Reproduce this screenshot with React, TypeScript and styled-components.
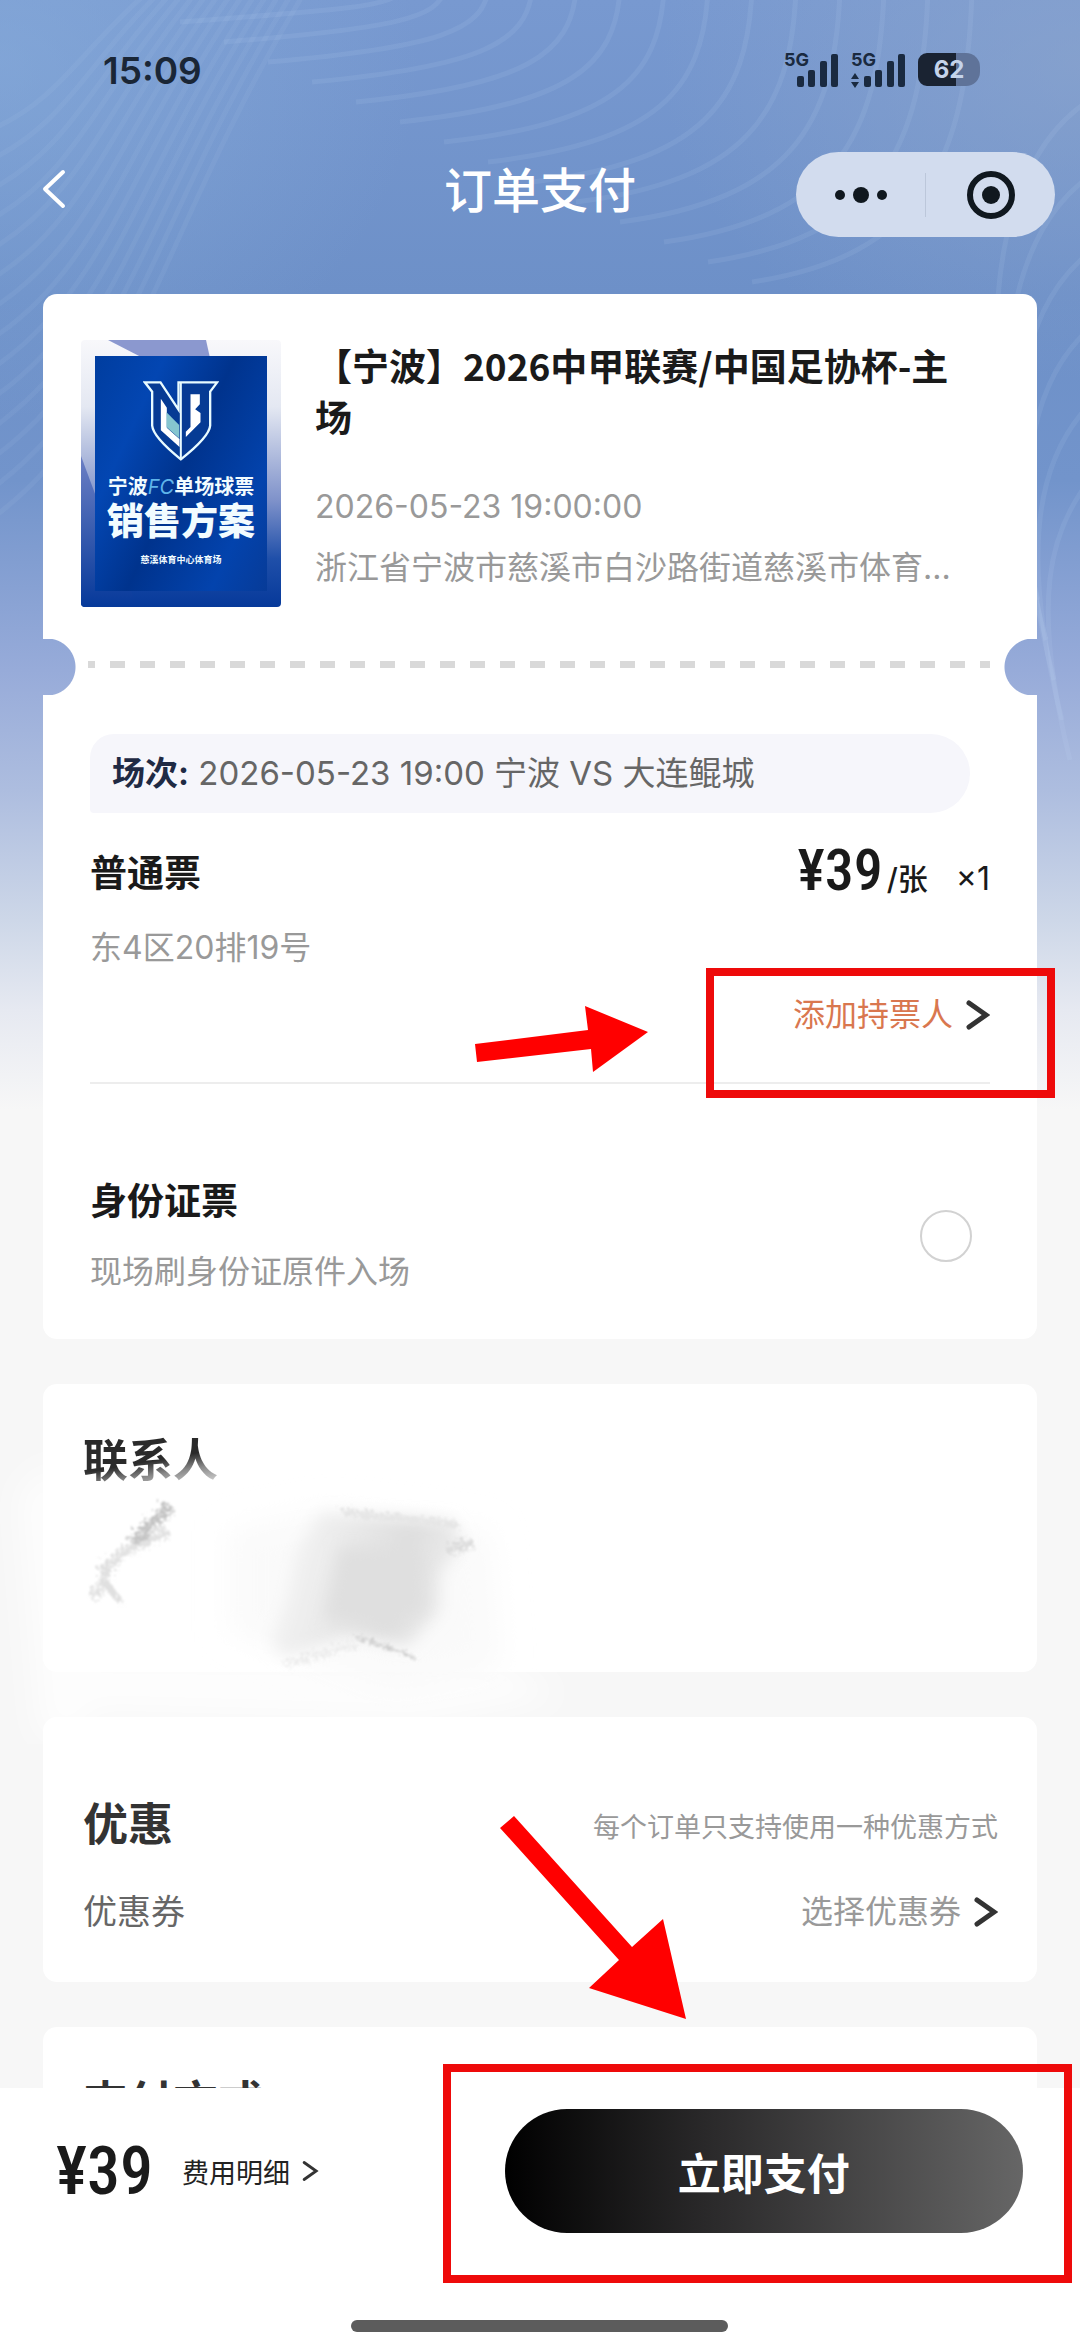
import { useState } from 'react';
import styled, { createGlobalStyle } from 'styled-components';

const waves = Array.from({ length: 14 }, (_, i) => i);

function Chevron({ width = 24, height = 30, stroke = 5, color = '#333' }) {
  return (
    <svg width={width} height={height} viewBox="0 0 24 30" aria-hidden="true">
      <path
        d="M3 3 L20 15 L3 27"
        fill="none"
        stroke={color}
        strokeWidth={stroke}
        strokeLinecap="round"
        strokeLinejoin="miter"
      />
    </svg>
  );
}

function SignalBars({ active = false }: { active?: boolean }) {
  return (
    <svg width="42" height="33" viewBox="0 0 42 33" aria-hidden="true">
      <rect x="0" y="22" width="7" height="11" rx="2" />
      <rect x="11" y="16" width="7" height="17" rx="2" />
      <rect x="23" y="7" width="7" height="26" rx="2" />
      <rect x="34" y="0" width="7" height="33" rx="2" />
      {active && (
        <path d="M-13 25 L-9 19 L-5 25 Z M-13 28 L-9 34 L-5 28 Z" />
      )}
    </svg>
  );
}

function Waves() {
  return (
    <WaveArt viewBox="0 0 1080 1100" preserveAspectRatio="none" aria-hidden="true">
      <g fill="none" stroke="#d5e6ff" strokeWidth="5" strokeOpacity="0.09">
        {waves.map((i) => {
          const x = 400 + i * 44;
          const y = 10 + i * 20;
          return (
            <path
              key={`r${i}`}
              d={`M${x} -10 C ${x - 5} ${y * 0.6}, ${x - 50} ${y * 0.95}, ${x - 220} ${y + 12}`}
            />
          );
        })}
        {waves.map((i) => (
          <path
            key={`l${i}`}
            strokeOpacity="0.06"
            d={`M-10 ${130 + i * 30} C ${60 + i * 6} ${100 + i * 24}, ${
              80 + i * 6
            } ${50 + i * 14}, ${150 + i * 12} -10`}
          />
        ))}
        {waves.slice(0, 6).map((i) => (
          <path
            key={`e${i}`}
            d={`M1090 ${100 + i * 76} C ${1010 + i * 8} ${150 + i * 76}, ${
              960 + i * 14
            } ${300 + i * 60}, ${1030 + i * 8} ${560 + i * 40}`}
          />
        ))}
      </g>
    </WaveArt>
  );
}

function ClubLogo() {
  return (
    <svg width="76" height="80" viewBox="220 152 227 240" aria-hidden="true">
      <path
        d="M225 156 H272 L326 238 V156 H442 L421 184 V286 Q418 320 333 387 Q250 320 247 286 V184 Z"
        fill="#063b94"
        stroke="#e8fbff"
        strokeWidth="7"
      />
      <path d="M333 156 V385" stroke="#e8fbff" strokeWidth="6" />
      <path d="M273 205 L291 232 V292 L329 326 V350 L273 300 Z" fill="#fff" />
      <path d="M290 246 L328 284 V324 L290 290 Z" fill="#86c5cf" />
      <path
        d="M362 192 H390 V222 L376 237 L392 248 V276 L348 320 V304 L362 290 Z"
        fill="#fff"
      />
    </svg>
  );
}

function PosterBackdrop() {
  return (
    <svg viewBox="0 0 200 267" aria-hidden="true">
      <defs>
        <linearGradient id="sheet" x1="0" y1="0" x2="0" y2="1">
          <stop offset="0" stopColor="#f8f8fb" />
          <stop offset="0.25" stopColor="#e4e8f2" />
          <stop offset="0.6" stopColor="#7f92ca" />
          <stop offset="0.82" stopColor="#1f4fa9" />
          <stop offset="1" stopColor="#06399a" />
        </linearGradient>
        <linearGradient id="shard" x1="0" y1="0" x2="0" y2="1">
          <stop offset="0" stopColor="#6c7fc4" />
          <stop offset="1" stopColor="#06399a" />
        </linearGradient>
      </defs>
      <path d="M0 0 H200 V267 H0 Z" fill="url(#sheet)" />
      <path d="M27 0 H125 L129 18 H62 Z" fill="#8b98cf" />
      <path d="M0 116 L56 267 H0 Z" fill="url(#shard)" />
    </svg>
  );
}

function Smudge() {
  return (
    <SmudgeArt viewBox="0 1383 660 360" width="660" height="360" aria-hidden="true">
      <defs>
        <filter id="soft" x="-30%" y="-30%" width="160%" height="160%">
          <feGaussianBlur stdDeviation="16" />
        </filter>
        <filter id="smear" x="-20%" y="-20%" width="140%" height="140%">
          <feGaussianBlur stdDeviation="8" />
        </filter>
        <filter id="grain" x="-20%" y="-20%" width="140%" height="140%">
          <feTurbulence baseFrequency="0.2" numOctaves="3" />
          <feDisplacementMap in="SourceGraphic" scale="16" />
          <feGaussianBlur stdDeviation="1" />
        </filter>
        <linearGradient id="blot" x1="0" y1="0.4" x2="1" y2="0.6">
          <stop offset="0" stopColor="#f6f6f6" />
          <stop offset="0.65" stopColor="#dedede" />
          <stop offset="1" stopColor="#f0f0f0" />
        </linearGradient>
      </defs>
      <path
        d="M20 1490 L60 1460 L90 1740 L40 1735 Z M60 1655 L500 1660 L560 1695 L420 1720 L60 1710 Z"
        fill="#fff"
        fillOpacity="0.8"
        filter="url(#soft)"
      />
      <path
        d="M230 1530 L330 1510 L490 1530 L500 1670 L390 1690 L230 1630 Z"
        fill="#fafafa"
        filter="url(#soft)"
      />
      <path
        d="M320 1512 L452 1520 L464 1542 L440 1572 L440 1610 L408 1644 L350 1634 L284 1656 L270 1640 L286 1600 L296 1550 Z"
        fill="url(#blot)"
        filter="url(#smear)"
      />
      <path
        d="M340 1546 L420 1550 L424 1610 L370 1624 L324 1618 Z"
        fill="#dfdfdf"
        filter="url(#smear)"
      />
      <g fill="none" strokeLinecap="round" filter="url(#grain)">
        <path d="M342 1508 L452 1520" stroke="#e6e6e6" strokeWidth="7" />
        <path d="M352 1632 L410 1652" stroke="#cfcfcf" strokeWidth="3" />
        <path d="M282 1660 L352 1640" stroke="#ececec" strokeWidth="5" />
        <path d="M446 1546 L466 1538" stroke="#dcdcdc" strokeWidth="8" />
        <path d="M163 1504 L132 1536" stroke="#c4c4c4" strokeWidth="11" />
        <path d="M162 1528 L118 1548 L100 1566" stroke="#e2e2e2" strokeWidth="8" />
        <path d="M108 1562 L90 1592 M104 1580 L114 1594" stroke="#e0e0e0" strokeWidth="7" />
      </g>
    </SmudgeArt>
  );
}

export default function App() {
  const [idTicket, setIdTicket] = useState(false);

  return (
    <Page>
      <GlobalStyle />
      <Waves />
      <Scroll>
        <StatusBar>
          <time>15:09</time>
          <StatusIcons>
            <Signal>
              <span>5G</span>
              <SignalBars />
            </Signal>
            <Signal>
              <span>5G</span>
              <SignalBars active />
            </Signal>
            <Battery>62</Battery>
          </StatusIcons>
        </StatusBar>

        <NavBar>
          <BackButton type="button" aria-label="返回">
            <svg width="26" height="40" viewBox="0 0 26 40">
              <path
                d="M22 3 L4 20 L22 37"
                fill="none"
                stroke="#fff"
                strokeWidth="4"
                strokeLinecap="round"
                strokeLinejoin="round"
              />
            </svg>
          </BackButton>
          <h1>订单支付</h1>
          <Capsule>
            <button type="button" aria-label="更多">
              <svg width="54" height="20" viewBox="0 0 54 20">
                <circle cx="6" cy="10" r="5" />
                <circle cx="27" cy="10" r="8" />
                <circle cx="48" cy="10" r="5" />
              </svg>
            </button>
            <i />
            <button type="button" aria-label="关闭">
              <svg width="50" height="50" viewBox="0 0 50 50">
                <circle cx="25" cy="25" r="21" fill="none" stroke="#10181f" strokeWidth="6" />
                <circle cx="25" cy="25" r="9" />
              </svg>
            </button>
          </Capsule>
        </NavBar>

        <Cards>
          <section>
            <TicketTop>
              <Poster>
                <PosterBackdrop />
                <PosterPanel>
                  <ClubLogo />
                  <PosterLine>
                    宁波<em>FC</em>单场球票
                  </PosterLine>
                  <PosterTitle>销售方案</PosterTitle>
                  <PosterVenue>慈溪体育中心体育场</PosterVenue>
                </PosterPanel>
              </Poster>
              <EventInfo>
                <h2>【宁波】2026中甲联赛/中国足协杯-主场</h2>
                <Muted as="time">2026-05-23 19:00:00</Muted>
                <Muted>浙江省宁波市慈溪市白沙路街道慈溪市体育...</Muted>
              </EventInfo>
            </TicketTop>
            <Perforation>
              <span />
            </Perforation>
            <TicketBody>
              <Session>
                <strong>场次:</strong> 2026-05-23 19:00 宁波 VS 大连鲲城
              </Session>
              <PriceRow>
                <ItemTitle>普通票</ItemTitle>
                <Price>
                  <Amount size={58}>¥39</Amount>
                  <Unit>/张</Unit>
                  <Count>×1</Count>
                </Price>
              </PriceRow>
              <Seat>东4区20排19号</Seat>
              <HolderRow>
                <HolderLink href="#holder">
                  添加持票人
                  <Chevron />
                </HolderLink>
                <ShortArrow viewBox="470 1000 184 80" aria-hidden="true">
                  <path
                    d="M475 1044 L588 1030 L585 1006 L648 1032 L593 1072 L591 1049 L477 1062 Z"
                    fill="#f00"
                  />
                </ShortArrow>
                <HolderFrame />
              </HolderRow>
              <Divider />
              <IdRow>
                <div>
                  <ItemTitle>身份证票</ItemTitle>
                  <Seat as="span">现场刷身份证原件入场</Seat>
                </div>
                <Radio
                  type="radio"
                  name="ticketType"
                  checked={idTicket}
                  onChange={() => setIdTicket(true)}
                />
              </IdRow>
            </TicketBody>
          </section>

          <ContactCard>
            <FadedTitle>联系人</FadedTitle>
            <Smudge />
          </ContactCard>

          <DiscountCard>
            <CardRow>
              <CardTitle>优惠</CardTitle>
              <Hint>每个订单只支持使用一种优惠方式</Hint>
            </CardRow>
            <CouponRow>
              <span>优惠券</span>
              <CouponLink href="#coupon">
                选择优惠券
                <Chevron />
              </CouponLink>
            </CouponRow>
            <LongArrow viewBox="495 1810 200 212" aria-hidden="true">
              <path
                d="M514 1815 L632 1946 L663 1918 L686 2018 L589 1987 L619 1959 L500 1827 Z"
                fill="#f00"
              />
            </LongArrow>
          </DiscountCard>

          <MethodCard>
            <CardTitle>支付方式</CardTitle>
          </MethodCard>
        </Cards>
      </Scroll>

      <PayBar>
        <PayRow>
          <Total>
            <Amount size={66}>¥39</Amount>
            <DetailButton type="button">
              费用明细
              <Chevron width={17} height={24} stroke={4} />
            </DetailButton>
          </Total>
          <PayButton type="button">立即支付</PayButton>
        </PayRow>
        <HomeIndicator />
        <PayFrame />
      </PayBar>
    </Page>
  );
}

const GlobalStyle = createGlobalStyle`
  * {
    box-sizing: border-box;
  }

  body {
    margin: 0;
    background: #f7f7f7;
    font-family: Inter, 'Noto Sans CJK SC', sans-serif;
    color: #1a1a1a;
  }

  h1, h2, h3, p {
    margin: 0;
  }

  button {
    padding: 0;
    border: 0;
    background: none;
    font-family: inherit;
    cursor: pointer;
  }

  a {
    text-decoration: none;
  }
`;

const Page = styled.div`
  position: relative;
  display: flex;
  flex-direction: column;
  height: 100vh;
  background: radial-gradient(
      ellipse 420px 360px at 0 60px,
      rgba(140, 178, 222, 0.5),
      rgba(140, 178, 222, 0)
    ),
    radial-gradient(
      ellipse 420px 320px at 100% 60px,
      rgba(145, 168, 205, 0.55),
      rgba(145, 168, 205, 0)
    ),
    linear-gradient(
      #7899d0 0,
      #6d90c8 294px,
      #7294cb 480px,
      #97abd9 670px,
      #adbddf 790px,
      #cdd7e8 920px,
      #e6e9f1 1010px,
      #f7f7f7 1110px
    );
`;

const WaveArt = styled.svg`
  position: absolute;
  top: 0;
  left: 0;
  width: 100%;
  height: 1100px;
`;

const Scroll = styled.div`
  position: relative;
  flex: 1;
  min-height: 0;
  overflow: hidden;
`;

const StatusBar = styled.div`
  display: flex;
  align-items: center;
  justify-content: space-between;
  padding: 48px 100px 0 103px;
  height: 92px;
  color: #1a2636;
  font-size: 37px;
  font-weight: 600;
`;

const StatusIcons = styled.div`
  display: flex;
  gap: 12px;
`;

const Signal = styled.div`
  display: flex;
  align-items: flex-end;
  padding-top: 1px;
  color: #1a2a40;

  span {
    width: 12px;
    align-self: flex-start;
    font-size: 18px;
    font-weight: 700;
    line-height: 12px;
  }

  svg {
    margin-left: 1px;
    overflow: visible;
    fill: #1a2a40;
  }
`;

const Battery = styled.div`
  width: 62px;
  height: 33px;
  border-radius: 9px 14px 14px 9px;
  background: linear-gradient(90deg, #1a2332 0 62%, #5f7399 62%);
  color: #c5d3ea;
  font-size: 24px;
  font-weight: 700;
  line-height: 34px;
  text-align: center;
`;

const NavBar = styled.header`
  display: grid;
  grid-template-columns: 1fr auto 1fr;
  align-items: center;
  margin-top: 60px;
  padding: 0 25px;
  height: 85px;

  h1 {
    padding-bottom: 8px;
    color: #fff;
    font-size: 48px;
    font-weight: 500;
    line-height: 60px;
  }
`;

const BackButton = styled.button`
  justify-self: start;
  display: flex;
  padding: 0 16px 12px;
`;

const Capsule = styled.div`
  justify-self: end;
  display: flex;
  align-items: center;
  width: 259px;
  height: 85px;
  border-radius: 43px;
  background: #d2dcee;

  button {
    flex: 1;
    display: flex;
    justify-content: center;
    fill: #10181f;
  }

  i {
    width: 1px;
    height: 44px;
    background: #bcc7da;
  }
`;

const Cards = styled.main`
  display: flex;
  flex-direction: column;
  gap: 45px;
  padding: 57px 43px 0;
`;

const Card = styled.section`
  position: relative;
  border-radius: 14px;
  background: #fff;
`;

const TicketTop = styled.div`
  display: flex;
  gap: 34px;
  padding: 46px 64px 32px 38px;
  border-radius: 14px 14px 0 0;
  background: #fff;
`;

const Poster = styled.div`
  position: relative;
  flex: none;
  width: 200px;
  height: 267px;
  padding: 16px 14px;
  border-radius: 4px;
  overflow: hidden;

  > svg {
    position: absolute;
    inset: 0;
  }
`;

const PosterPanel = styled.div`
  position: relative;
  display: flex;
  flex-direction: column;
  align-items: center;
  height: 100%;
  padding-top: 25px;
  background: linear-gradient(115deg, #003d9f 0, #0346b2 25%, #00338d 50%, #0343ad 80%, #073b98 100%);
  color: #f2fcff;
  white-space: nowrap;
`;

const PosterLine = styled.span`
  margin-top: 14px;
  font-size: 20px;
  font-weight: 700;
  line-height: 24px;

  em {
    color: #5fb4ea;
    font-weight: 400;
  }
`;

const PosterTitle = styled.span`
  margin-top: 2px;
  font-size: 37px;
  font-weight: 900;
  line-height: 42px;
`;

const PosterVenue = styled.span`
  margin-top: 11px;
  font-size: 9px;
  font-weight: 700;
  line-height: 12px;
`;

const EventInfo = styled.div`
  display: flex;
  flex-direction: column;
  flex: 1;
  min-width: 0;
  gap: 13px;

  h2 {
    margin-bottom: 28px;
    font-family: 'Noto Sans CJK SC', sans-serif;
    font-size: 37px;
    font-weight: 700;
    line-height: 51px;
  }
`;

const Muted = styled.p`
  color: #999;
  font-size: 32px;
  line-height: 48px;
  white-space: nowrap;
`;

const Perforation = styled.div`
  display: flex;
  align-items: center;
  height: 56px;
  padding: 0 47px 6px 45px;
  background: radial-gradient(circle at 4px 28px, transparent 28px, #fff 29px) 0 0 / 50% 100%
      no-repeat,
    radial-gradient(circle at calc(100% - 4px) 28px, transparent 28px, #fff 29px) 100% 0 / 50%
      100% no-repeat;

  span {
    flex: 1;
    height: 7px;
    background: repeating-linear-gradient(
      90deg,
      #d9d9d9 0 7px,
      transparent 7px 22px,
      #d9d9d9 22px 30px
    );
  }
`;

const TicketBody = styled.div`
  padding: 39px 47px 43px;
  border-radius: 0 0 14px 14px;
  background: #fff;
`;

const Session = styled.p`
  margin-right: 20px;
  padding: 0 22px;
  border-radius: 24px 40px 40px 4px;
  background: #f6f6fb;
  color: #666;
  font-size: 33px;
  line-height: 79px;

  strong {
    color: #1f2a44;
  }
`;

const PriceRow = styled.div`
  display: flex;
  align-items: center;
  justify-content: space-between;
  height: 60px;
  margin-top: 31px;
`;

const ItemTitle = styled.h3`
  font-size: 37px;
  font-weight: 700;
  line-height: 52px;
`;

const Price = styled.div`
  display: flex;
  align-items: baseline;
  line-height: 60px;
`;

const Amount = styled.span<{ size: number }>`
  font-family: 'Roboto Condensed', Roboto, sans-serif;
  font-size: ${(props) => props.size}px;
  font-weight: 500;
`;

const Unit = styled.span`
  margin-left: 4px;
  font-size: 30px;
  font-weight: 500;
`;

const Count = styled.span`
  margin-left: 28px;
  font-size: 32px;
`;

const Seat = styled.p`
  margin-top: 20px;
  color: #999;
  font-size: 32px;
  line-height: 48px;
`;

const HolderRow = styled.div`
  position: relative;
  display: flex;
  justify-content: flex-end;
  margin-top: 19px;
`;

const HolderLink = styled.a`
  display: flex;
  align-items: center;
  gap: 13px;
  color: #d9774f;
  font-size: 32px;
  line-height: 48px;
`;

const HolderFrame = styled.div`
  position: absolute;
  top: -23px;
  right: -65px;
  width: 349px;
  height: 130px;
  border: 8px solid #ee0a0a;
  pointer-events: none;
`;

const ShortArrow = styled.svg`
  position: absolute;
  top: 9px;
  right: 336px;
  width: 184px;
  height: 80px;
`;

const Divider = styled.hr`
  height: 2px;
  margin: 43px 0 92px;
  border: 0;
  background: #ededed;
`;

const IdRow = styled.label`
  display: flex;
  align-items: center;
  justify-content: space-between;
  padding-right: 18px;

  span {
    display: block;
  }
`;

const Radio = styled.input`
  appearance: none;
  width: 52px;
  height: 52px;
  margin: 0;
  border: 2px solid #d2d2d2;
  border-radius: 50%;

  &:checked {
    border: 14px solid #1a1a1a;
  }
`;

const CardTitle = styled.h3`
  color: #333;
  font-size: 45px;
  font-weight: 700;
  line-height: 60px;
`;

const FadedTitle = styled(CardTitle)`
  width: fit-content;
  background: linear-gradient(170deg, #2a2a2a 0 50%, #8a8a8a 68%, #c4c4c4 85%);
  background-clip: text;
  color: transparent;
`;

const ContactCard = styled(Card)`
  z-index: 1;
  min-height: 288px;
  padding: 47px 40px;
`;

const SmudgeArt = styled.svg`
  position: absolute;
  top: 0;
  left: -43px;
  pointer-events: none;
`;

const DiscountCard = styled(Card)`
  z-index: 2;
  padding: 78px 39px 46px 40px;
`;

const CardRow = styled.div`
  display: flex;
  align-items: center;
  justify-content: space-between;
`;

const Hint = styled.span`
  color: #999;
  font-size: 27px;
`;

const CouponRow = styled(CardRow)`
  margin-top: 33px;
  color: #666;
  font-size: 34px;
  line-height: 48px;
`;

const CouponLink = styled.a`
  display: flex;
  align-items: center;
  gap: 13px;
  color: #999;
  font-size: 32px;
`;

const LongArrow = styled.svg`
  position: absolute;
  top: 94px;
  left: 452px;
  width: 200px;
  height: 212px;
  pointer-events: none;
`;

const MethodCard = styled(Card)`
  height: 200px;
  padding: 46px 40px;
`;

const PayBar = styled.footer`
  position: relative;
  z-index: 3;
  padding: 21px 57px 15px 56px;
  background: #fff;
`;

const PayRow = styled.div`
  display: flex;
  align-items: center;
  justify-content: space-between;
`;

const Total = styled.div`
  display: flex;
  align-items: center;
  gap: 29px;
`;

const DetailButton = styled.button`
  display: flex;
  align-items: center;
  gap: 12px;
  color: #222;
  font-size: 27px;
`;

const PayButton = styled.button`
  width: 48vw;
  height: 124px;
  border-radius: 62px;
  background: linear-gradient(90deg, #000 0, #2b2a2b 40%, #666 100%);
  color: #fff;
  font-size: 43px;
  font-weight: 700;
`;

const PayFrame = styled.div`
  position: absolute;
  top: -24px;
  right: 8px;
  width: 629px;
  height: 219px;
  border: 8px solid #ee0a0a;
  pointer-events: none;
`;

const HomeIndicator = styled.div`
  width: 39%;
  height: 12px;
  margin: 87px auto 0;
  border-radius: 6px;
  background: #5c5c5c;
`;
